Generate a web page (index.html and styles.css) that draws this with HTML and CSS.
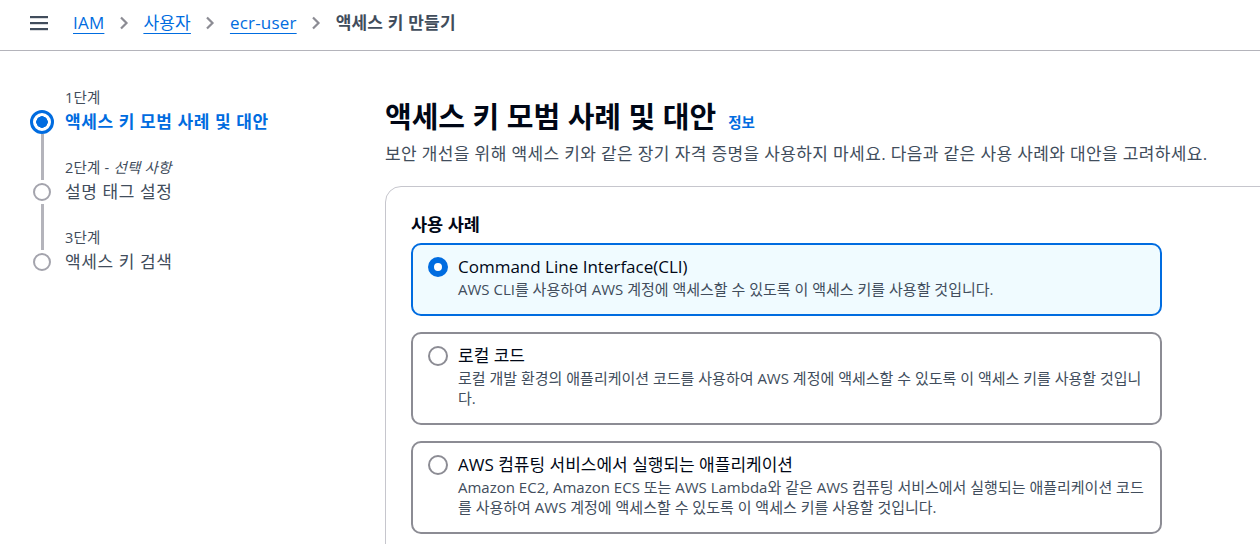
FILE: index.html
```html
<!DOCTYPE html>
<html lang="ko">
<head>
<meta charset="utf-8">
<title>액세스 키 만들기</title>
<link rel="stylesheet" href="styles.css">
</head>
<body>
<header class="topbar">
  <button class="menu-btn" aria-label="메뉴">
    <svg width="18" height="16" viewBox="0 0 18 16"><rect x="0" y="1" width="18" height="2.2" fill="#414d5c"/><rect x="0" y="7" width="18" height="2.2" fill="#414d5c"/><rect x="0" y="13" width="18" height="2.2" fill="#414d5c"/></svg>
  </button>
  <nav class="crumbs">
    <a class="crumb-link" href="#">IAM</a>
    <svg class="chev" width="10" height="14" viewBox="0 0 10 14"><path d="M2 1.5 L7.5 7 L2 12.5" fill="none" stroke="#8c8c94" stroke-width="2.2"/></svg>
    <a class="crumb-link" href="#">사용자</a>
    <svg class="chev" width="10" height="14" viewBox="0 0 10 14"><path d="M2 1.5 L7.5 7 L2 12.5" fill="none" stroke="#8c8c94" stroke-width="2.2"/></svg>
    <a class="crumb-link" href="#">ecr-user</a>
    <svg class="chev" width="10" height="14" viewBox="0 0 10 14"><path d="M2 1.5 L7.5 7 L2 12.5" fill="none" stroke="#8c8c94" stroke-width="2.2"/></svg>
    <span class="crumb-current">액세스 키 만들기</span>
  </nav>
</header>

<div class="layout">
  <aside class="steps">
    <div class="step first">
      <div class="rail">
        <div class="rail-top"></div>
        <div class="dot active"></div>
        <div class="rail-bottom"></div>
      </div>
      <div class="step-text">
        <div class="step-num">1단계</div>
        <div class="step-title current">액세스 키 모범 사례 및 대안</div>
      </div>
    </div>
    <div class="step">
      <div class="rail">
        <div class="rail-top"></div>
        <div class="dot"></div>
        <div class="rail-bottom"></div>
      </div>
      <div class="step-text">
        <div class="step-num">2단계 - <i>선택 사항</i></div>
        <div class="step-title">설명 태그 설정</div>
      </div>
    </div>
    <div class="step last">
      <div class="rail">
        <div class="rail-top"></div>
        <div class="dot"></div>
        <div class="rail-bottom"></div>
      </div>
      <div class="step-text">
        <div class="step-num">3단계</div>
        <div class="step-title">액세스 키 검색</div>
      </div>
    </div>
  </aside>

  <main class="main">
    <div class="page-head">
      <h1 class="page-title">액세스 키 모범 사례 및 대안</h1>
      <a class="info" href="#">정보</a>
    </div>
    <p class="page-desc">보안 개선을 위해 액세스 키와 같은 장기 자격 증명을 사용하지 마세요. 다음과 같은 사용 사례와 대안을 고려하세요.</p>

    <section class="panel">
      <h2 class="panel-title">사용 사례</h2>
      <div class="options">
        <label class="option selected">
          <span class="radio checked"></span>
          <span class="option-body">
            <span class="option-label">Command Line Interface(CLI)</span>
            <span class="option-desc">AWS CLI를 사용하여 AWS 계정에 액세스할 수 있도록 이 액세스 키를 사용할 것입니다.</span>
          </span>
        </label>
        <label class="option">
          <span class="radio"></span>
          <span class="option-body">
            <span class="option-label">로컬 코드</span>
            <span class="option-desc">로컬 개발 환경의 애플리케이션 코드를 사용하여 AWS 계정에 액세스할 수 있도록 이 액세스 키를 사용할 것입니다.</span>
          </span>
        </label>
        <label class="option">
          <span class="radio"></span>
          <span class="option-body">
            <span class="option-label">AWS 컴퓨팅 서비스에서 실행되는 애플리케이션</span>
            <span class="option-desc">Amazon EC2, Amazon ECS 또는 AWS Lambda와 같은 AWS 컴퓨팅 서비스에서 실행되는 애플리케이션 코드를 사용하여 AWS 계정에 액세스할 수 있도록 이 액세스 키를 사용할 것입니다.</span>
          </span>
        </label>
      </div>
    </section>
  </main>
</div>
</body>
</html>
```

FILE: styles.css
```css
* { box-sizing: border-box; }

html, body {
  margin: 0;
  padding: 0;
  background: #ffffff;
  overflow: hidden;
}

body {
  font-family: "Open Sans", "Noto Sans CJK KR", sans-serif;
  color: #000716;
  width: 1260px;
  height: 544px;
}

/* top bar */
.topbar {
  height: 51px;
  border-bottom: 1px solid #b4b4bb;
  display: flex;
  align-items: center;
  padding-left: 30px;
  padding-bottom: 4px;
}

.menu-btn {
  border: 0;
  background: none;
  padding: 0;
  width: 18px;
  height: 16px;
  display: flex;
  margin-right: 25px;
}

.crumbs {
  display: flex;
  align-items: center;
  gap: 13.5px;
  font-size: 17px;
  line-height: 22px;
  letter-spacing: 0.2px;
}

.crumb-link {
  color: #006ce0;
  text-decoration: underline;
  text-underline-offset: 4px;
  text-decoration-thickness: 1px;
}

.chev { display: block; margin: 0 1px; }

.crumb-current {
  color: #414d5c;
  font-weight: 700;
}

/* layout */
.layout {
  display: flex;
  padding-left: 30px;
}

/* steps nav */
.steps {
  width: 355px;
  flex: none;
  padding-top: 36px;
  display: flex;
  flex-direction: column;
}

.step {
  display: flex;
  gap: 11px;
}

.rail {
  width: 24px;
  flex: none;
  display: flex;
  flex-direction: column;
  align-items: center;
}

.rail-top {
  height: 23px;
  width: 3px;
  background: #b4b4bb;
}

.rail-bottom {
  flex: 1;
  width: 3px;
  background: #b4b4bb;
}

.first .rail-top, .last .rail-bottom { background: transparent; }

.dot {
  width: 18px;
  height: 18px;
  border: 2px solid #a4a4ad;
  border-radius: 50%;
  margin: 3px 0;
  flex: none;
}

.dot.active {
  width: 24px;
  height: 24px;
  margin: 0;
  border: 3px solid #006ce0;
  background: radial-gradient(circle, #006ce0 0 5.5px, #ffffff 6px);
}

.step-text {
  padding-bottom: 22px;
}

.step-num {
  font-size: 14.5px;
  line-height: 22px;
  color: #414d5c;
  letter-spacing: 0.2px;
}

.step-num i { font-style: italic; }

.step-title {
  font-size: 17px;
  line-height: 26px;
  color: #414d5c;
  letter-spacing: 0.6px;
}

.step-title.current {
  color: #006ce0;
  font-weight: 700;
}

/* main */
.main {
  flex: none;
  width: 1000px;
  padding-top: 48px;
}

.page-head {
  display: flex;
  align-items: baseline;
  gap: 12px;
}

.page-title {
  margin: 0;
  font-size: 29px;
  line-height: 36px;
  font-weight: 700;
  color: #000716;
}

.info {
  font-size: 14.5px;
  font-weight: 700;
  color: #006ce0;
  text-decoration: none;
}

.page-desc {
  margin: 7px 0 0;
  font-size: 17px;
  line-height: 24px;
  color: #414d5c;
  letter-spacing: 0.37px;
}

.panel {
  margin-top: 20px;
  border: 1px solid #c6c6cd;
  border-radius: 16px;
  width: 940px;
  padding: 24px 25px 30px;
}

.panel-title {
  margin: 0 0 6px;
  font-size: 17.5px;
  line-height: 26px;
  font-weight: 700;
}

.options {
  display: flex;
  flex-direction: column;
  gap: 16px;
}

.option {
  width: 751px;
  display: flex;
  gap: 10px;
  border: 2px solid #8c8c94;
  border-radius: 10px;
  padding: 10px 16px 15px 15px;
  background: #ffffff;
}

.option.selected {
  border-color: #006ce0;
  background: #f0fbff;
}

.radio {
  flex: none;
  width: 20px;
  height: 20px;
  margin-top: 2px;
  border: 2px solid #8c8c94;
  border-radius: 50%;
  background: #ffffff;
}

.radio.checked {
  border: 6px solid #006ce0;
  background: #ffffff;
}

.option-body {
  display: flex;
  flex-direction: column;
}

.option-label {
  font-size: 17px;
  line-height: 24px;
  color: #000716;
}

.option-desc {
  font-size: 15px;
  line-height: 20px;
  color: #414d5c;
}
```
